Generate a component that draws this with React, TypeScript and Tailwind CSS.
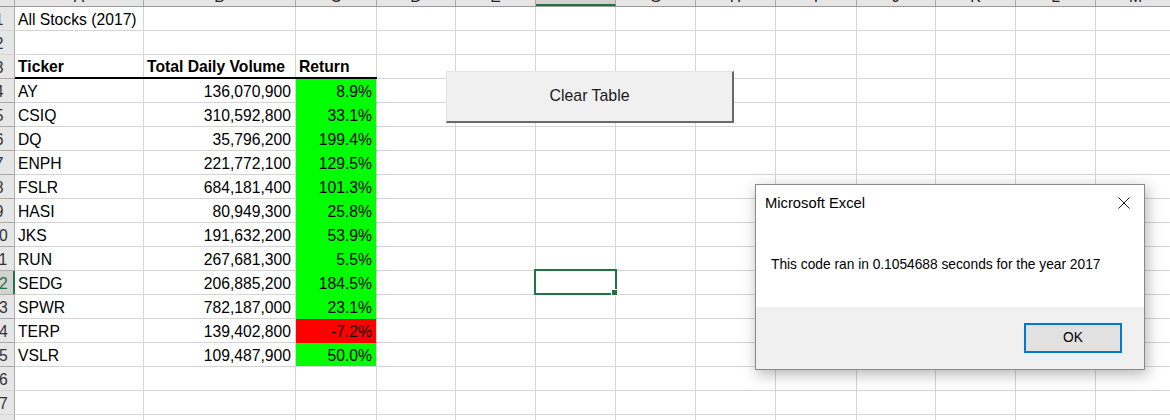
import React from "react";

const COLS = [
  { letter: "A", w: 129 },
  { letter: "B", w: 152 },
  { letter: "C", w: 81 },
  { letter: "D", w: 79 },
  { letter: "E", w: 80 },
  { letter: "F", w: 80 },
  { letter: "G", w: 80 },
  { letter: "H", w: 80 },
  { letter: "I", w: 81 },
  { letter: "J", w: 79 },
  { letter: "K", w: 80 },
  { letter: "L", w: 80 },
  { letter: "M", w: 80 },
];

type Stock = { ticker: string; volume: string; ret: string; up: boolean };

const STOCKS: Stock[] = [
  { ticker: "AY", volume: "136,070,900", ret: "8.9%", up: true },
  { ticker: "CSIQ", volume: "310,592,800", ret: "33.1%", up: true },
  { ticker: "DQ", volume: "35,796,200", ret: "199.4%", up: true },
  { ticker: "ENPH", volume: "221,772,100", ret: "129.5%", up: true },
  { ticker: "FSLR", volume: "684,181,400", ret: "101.3%", up: true },
  { ticker: "HASI", volume: "80,949,300", ret: "25.8%", up: true },
  { ticker: "JKS", volume: "191,632,200", ret: "53.9%", up: true },
  { ticker: "RUN", volume: "267,681,300", ret: "5.5%", up: true },
  { ticker: "SEDG", volume: "206,885,200", ret: "184.5%", up: true },
  { ticker: "SPWR", volume: "782,187,000", ret: "23.1%", up: true },
  { ticker: "TERP", volume: "139,402,800", ret: "-7.2%", up: false },
  { ticker: "VSLR", volume: "109,487,900", ret: "50.0%", up: true },
];

function RowHeader({ n }: { n: number }) {
  const active = n === 12;
  return (
    <div
      className={`w-[15px] shrink-0 h-full overflow-hidden flex items-end pb-[1px] ${
        active
          ? "bg-[#d2d2d2] border-r-2 border-[#217346] text-[#217346]"
          : "bg-[#e6e6e6] border-r border-[#ababab] text-[#333]"
      }`}
    >
      <div className="w-[30px] -ml-[16px] shrink-0 text-center leading-[18px]">{n}</div>
    </div>
  );
}

function Cell({
  w,
  children,
  align = "left",
  bold,
  fill,
  bottom,
}: {
  w: number;
  children?: React.ReactNode;
  align?: "left" | "right";
  bold?: boolean;
  fill?: string;
  bottom?: string;
}) {
  return (
    <div
      className={`shrink-0 h-full flex items-end pb-[1px] border-r border-[#d4d4d4] whitespace-nowrap overflow-visible ${
        align === "right" ? "justify-end pr-[4px]" : "pl-[3px]"
      } ${bold ? "font-bold" : ""}`}
      style={{ width: w, background: fill, borderBottom: bottom }}
    >
      <span className="leading-[18px]">{children}</span>
    </div>
  );
}

function SheetRow({ n, children, bb = "border-[#d4d4d4]" }: { n: number; children?: React.ReactNode; bb?: string }) {
  return (
    <div className={`flex h-[24px] shrink-0 border-b ${bb}`}>
      <RowHeader n={n} />
      {children}
    </div>
  );
}

export default function App() {
  const rest = COLS.slice(3);
  return (
    <div className="relative w-[1170px] h-[420px] overflow-hidden bg-white text-black font-['Liberation_Sans',Arial,sans-serif] text-[15.7px]">
      {/* column header strip, mostly scrolled out of view */}
      <div className="flex h-[7px] bg-[#e6e6e6] border-b border-[#9b9b9b] overflow-hidden">
        <div className="w-[15px] shrink-0 border-r border-[#ababab]" />
        {COLS.map((c) => (
          <div
            key={c.letter}
            className={`shrink-0 h-[6px] flex justify-center items-end overflow-hidden border-r border-[#ababab] ${
              c.letter === "F" ? "bg-[#d2d2d2] border-b-2 border-b-[#217346] text-[#217346]" : "text-[#222]"
            }`}
            style={{ width: c.w }}
          >
            <span className="leading-[16px] mb-[1px]">{c.letter}</span>
          </div>
        ))}
      </div>

      <div className="flex flex-col">
        <SheetRow n={1}>
          <Cell w={129}>All Stocks (2017)</Cell>
          <Cell w={152} />
          <Cell w={81} />
          {rest.map((c) => (
            <Cell key={c.letter} w={c.w} />
          ))}
        </SheetRow>
        <SheetRow n={2}>
          {COLS.map((c) => (
            <Cell key={c.letter} w={c.w} />
          ))}
        </SheetRow>
        <div className="flex h-[24px] shrink-0">
          <div className="h-full border-b border-[#ababab]">
            <RowHeader n={3} />
          </div>
          <div className="flex h-full border-b-2 border-black">
            <Cell w={129} bold>
              Ticker
            </Cell>
            <Cell w={152} bold>
              Total Daily Volume
            </Cell>
            <Cell w={81} bold>
              Return
            </Cell>
          </div>
          <div className="flex h-full border-b border-[#d4d4d4]">
            {rest.map((c) => (
              <Cell key={c.letter} w={c.w} />
            ))}
          </div>
        </div>

        {STOCKS.map((s, i) => {
          const fill = s.up ? "#00ff00" : "#ff0000";
          const last = i === STOCKS.length - 1;
          return (
            <div key={s.ticker} className="flex h-[24px] shrink-0">
              <div className="h-full border-b border-[#ababab]">
                <RowHeader n={i + 4} />
              </div>
              <div className="flex h-full border-b border-[#d4d4d4]">
                <Cell w={129}>{s.ticker}</Cell>
                <Cell w={152} align="right">
                  {s.volume}
                </Cell>
              </div>
              <Cell w={81} align="right" fill={fill} bottom={`1px solid ${last ? "#d4d4d4" : fill}`}>
                {s.ret}
              </Cell>
              <div className="flex h-full border-b border-[#d4d4d4]">
                {rest.map((c) => (
                  <Cell key={c.letter} w={c.w} />
                ))}
              </div>
            </div>
          );
        })}

        {[16, 17, 18].map((n) => (
          <SheetRow key={n} n={n}>
            {COLS.map((c) => (
              <Cell key={c.letter} w={c.w} />
            ))}
          </SheetRow>
        ))}
      </div>

      {/* active cell F12 */}
      <div className="absolute left-[534px] top-[269px] w-[83px] h-[26px] border-2 border-[#217346]" />
      <div className="absolute left-[611px] top-[289px] w-[7px] h-[7px] bg-[#217346] border border-white" />

      {/* form button */}
      <button className="absolute left-[446px] top-[71px] w-[288px] h-[52px] bg-[#f0f0f0] border-t border-l border-[#e3e3e3] border-r-2 border-b-2 border-r-[#696969] border-b-[#696969] text-[15.9px] text-[#1a1a1a] flex items-center justify-center pb-[2px]">
        Clear Table
      </button>

      {/* message box */}
      <div className="absolute left-[755px] top-[184px] w-[390px] h-[186px] border border-[#8a8a8a] bg-[#f0f0f0] flex flex-col shadow-[2px_4px_14px_rgba(0,0,0,0.3)]">
        <div className="bg-white h-[122px] shrink-0 flex flex-col">
          <div className="flex items-center justify-between pl-[9px] pr-[14px] pt-[9px]">
            <span className="text-[14.75px] leading-[18px] text-black">Microsoft Excel</span>
            <svg width="12" height="12" viewBox="0 0 12 12" className="text-[#1a1a1a]">
              <path d="M0.5 0.5L11.5 11.5M11.5 0.5L0.5 11.5" stroke="currentColor" strokeWidth="1" fill="none" />
            </svg>
          </div>
          <div className="pl-[15px] mt-[44px] text-[13.75px] leading-[18px] text-black whitespace-nowrap">
            This code ran in 0.1054688 seconds for the year 2017
          </div>
        </div>
        <div className="flex justify-end pt-[16px] pr-[22px]">
          <button className="w-[98px] h-[30px] border-2 border-[#0078d7] bg-[#e1e1e1] text-[13.75px] text-black flex items-center justify-center">
            OK
          </button>
        </div>
      </div>
    </div>
  );
}
